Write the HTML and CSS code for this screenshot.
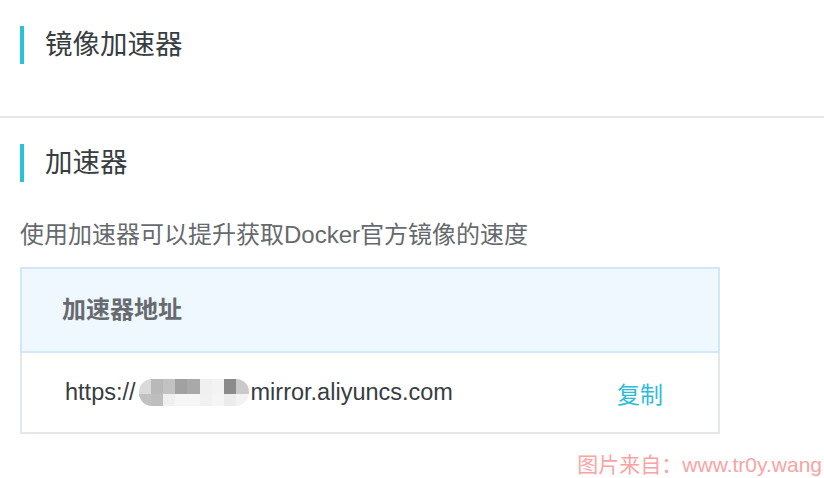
FILE: index.html
```html
<!DOCTYPE html>
<html lang="zh-CN">
<head>
<meta charset="utf-8">
<title>镜像加速器</title>
<link rel="stylesheet" href="styles.css">
</head>
<body>
  <section class="section section-top">
    <h2 class="section-title">镜像加速器</h2>
  </section>
  <section class="section">
    <h2 class="section-title">加速器</h2>
    <p class="desc">使用加速器可以提升获取Docker官方镜像的速度</p>
    <div class="table">
      <div class="table-head">加速器地址</div>
      <div class="table-row">
        <div class="url">
          <span>https://</span>
          <span class="mosaic">
            <i class="m1"></i><i class="m2"></i><i class="m3"></i><i class="m4"></i><i class="m5"></i><i class="m6"></i><i class="m7"></i><i class="m8"></i><i class="m9"></i>
            <i class="n1"></i><i class="n2"></i><i class="n3"></i><i class="n4"></i><i class="n5"></i><i class="n6"></i><i class="n7"></i><i class="n8"></i><i class="n9"></i>
          </span>
          <span>mirror.aliyuncs.com</span>
        </div>
        <a class="copy" href="#">复制</a>
      </div>
    </div>
  </section>
  <div class="watermark">图片来自：www.tr0y.wang</div>
</body>
</html>
```
FILE: styles.css
```css
html, body {
  margin: 0;
  padding: 0;
  background: #ffffff;
}
body {
  font-family: "Liberation Sans", "Noto Sans CJK SC", sans-serif;
  color: #373d41;
}
.section {
  padding: 26px 0 0 20px;
}
.section-top {
  padding-bottom: 52px;
  border-bottom: 2px solid #e6e6e6;
}
.section-title {
  margin: 0;
  height: 38px;
  line-height: 38px;
  border-left: 4px solid #2cbfd9;
  padding-left: 21px;
  font-size: 27.5px;
  font-weight: normal;
  color: #373d41;
}
.desc {
  margin: 37px 0 0 0;
  font-size: 24px;
  line-height: 32px;
  color: #666a6e;
}
.table {
  margin-top: 16px;
  width: 700px;
}
.table-head {
  height: 82px;
  line-height: 82px;
  background: #eff7ff;
  border: 2px solid #d3e7fb;
  padding-left: 40px;
  font-size: 24px;
  font-weight: bold;
  color: #676b6f;
}
.table-row {
  height: 79px;
  border: 2px solid #e4e8ec;
  border-top: none;
  display: flex;
  align-items: center;
  justify-content: space-between;
  padding: 0 55px 0 43px;
  font-size: 23.5px;
  color: #373d41;
}
.url {
  display: flex;
  align-items: center;
}
.mosaic {
  display: grid;
  grid-template-columns: repeat(9, 1fr);
  grid-template-rows: 15px 12px;
  width: 110px;
  height: 27px;
  margin: 0 2px 0 3px;
  border-radius: 13px;
  overflow: hidden;
}
.mosaic i { display: block; }
.m1 { background: #dadada; }
.m2 { background: #b9b9b9; }
.m3 { background: #c2c2c2; }
.m4 { background: #a1a1a1; }
.m5 { background: #a9a9a9; }
.m6 { background: #f0f0f0; }
.m7 { background: #f3f3f3; }
.m8 { background: #8b8b8b; }
.m9 { background: #c9c9c9; }
.n1 { background: #c1c1c1; }
.n2 { background: #bebebe; }
.n3 { background: #f0f0f0; }
.n4 { background: #f6f6f6; }
.n5 { background: #f6f6f6; }
.n6 { background: #f1f1f1; }
.n7 { background: #f5f5f5; }
.n8 { background: #ececec; }
.n9 { background: #f3f3f3; }
.copy {
  color: #2dbcd8;
  text-decoration: none;
  font-size: 23px;
}
.watermark {
  position: absolute;
  right: 2px;
  bottom: 1px;
  font-family: "Liberation Sans", "Noto Sans CJK SC", sans-serif;
  font-size: 21px;
  line-height: 24px;
  color: #f9a4a4;
}
```
